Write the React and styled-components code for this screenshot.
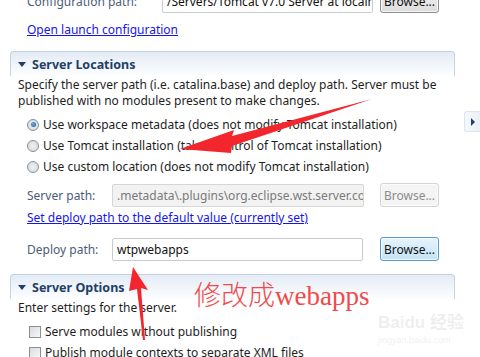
import React from 'react'
import styled, { createGlobalStyle } from 'styled-components'

const Global = createGlobalStyle`
  html, body { margin: 0; padding: 0; background: #fff; overflow: hidden; }
  body { font-family: "Noto Sans", "Open Sans", sans-serif; font-size: 12px; color: #1e1e1e; }
`

const Page = styled.div`
  position: relative;
  width: 480px;
  height: 357px;
  overflow: hidden;
`

const Content = styled.div`
  margin-top: -11px;
  padding: 0 25px 0 10px;
  display: flex;
  flex-direction: column;
`

const FormRow = styled.div`
  display: flex;
  align-items: center;
  height: ${p => p.h || 24}px;
  padding-left: 17px;
  margin-top: ${p => p.mt || 0}px;
`

const Label = styled.span`
  width: ${p => p.w}px;
  flex-shrink: 0;
  color: #4b5c78;
`

const Field = styled.div`
  box-sizing: border-box;
  width: ${p => p.w}px;
  height: ${p => p.h || 23}px;
  border: 1px solid ${p => p.disabled ? '#d6d6d6' : '#c8ccd2'};
  border-radius: 2px;
  background: ${p => p.disabled ? '#f2f2f2' : '#fff'};
  color: ${p => p.disabled ? '#7a7a7a' : '#111'};
  padding: 0 4px;
  display: flex;
  align-items: center;
  white-space: nowrap;
  overflow: hidden;
`

const Button = styled.div`
  box-sizing: border-box;
  width: 59px;
  height: 24px;
  margin-left: ${p => p.ml}px;
  border-radius: 3px;
  display: flex;
  align-items: center;
  justify-content: center;
  border: 1px solid ${p => p.active ? '#5c9ac9' : p.disabled ? '#d4d4d4' : '#8f8f8f'};
  background: ${p => p.active
    ? 'linear-gradient(#e6f4fc, #c4e3f6)'
    : p.disabled ? '#f4f4f4' : 'linear-gradient(#f2f2f2, #dcdcdc)'};
  color: ${p => p.disabled ? '#8c8c8c' : '#111'};
  box-shadow: inset 0 0 0 1px rgba(255,255,255,0.7);
`

const Link = styled.a`
  color: #1515e8;
  text-decoration: underline;
  padding-left: 17px;
  height: ${p => p.h || 20}px;
  line-height: ${p => p.h || 20}px;
  margin-top: ${p => p.mt || 0}px;
`

const SectionHead = styled.div`
  margin-top: ${p => p.mt}px;
  height: 24px;
  border: 1px solid #c3d1e2;
  border-bottom: none;
  border-radius: 4px 4px 0 0;
  background: linear-gradient(#e4ebf5, #fdfeff);
  display: flex;
  align-items: center;
  padding-left: 7px;
  font-weight: 700;
  color: #223f66;
  font-size: 12.5px;
  gap: 6px;
`

const Tri = styled.span`
  width: 0;
  height: 0;
  border-left: 4px solid transparent;
  border-right: 4px solid transparent;
  border-top: 5px solid #223f66;
`

const Desc = styled.div`
  padding-left: 8px;
  line-height: 16px;
  margin-top: ${p => p.mt || 0}px;
`

const OptionList = styled.div`
  display: flex;
  flex-direction: column;
  padding-left: 17px;
  margin-top: ${p => p.mt || 0}px;
`

const Option = styled.label`
  display: flex;
  align-items: center;
  gap: 4px;
  height: 21px;
  white-space: nowrap;
`

const Radio = styled.span`
  box-sizing: border-box;
  width: 12px;
  height: 12px;
  border-radius: 50%;
  border: 1px solid #8a8f96;
  background: radial-gradient(circle, #eef0f2 0%, #d4d8dc 100%);
  display: flex;
  align-items: center;
  justify-content: center;
  &::after {
    content: '';
    width: 5px;
    height: 5px;
    border-radius: 50%;
    background: ${p => p.checked ? 'radial-gradient(circle at 40% 40%, #6fb6ee, #18487a)' : 'transparent'};
  }
`

const Check = styled.span`
  box-sizing: border-box;
  width: 12px;
  height: 12px;
  margin-left: 2px;
  border: 1px solid #8a8f96;
  background: linear-gradient(135deg, #d9dcdf, #f6f7f8);
`

const SideTab = styled.div`
  position: absolute;
  right: 0;
  top: 111px;
  width: 15px;
  height: 19px;
  border: 1px solid #dde5ee;
  border-right: none;
  border-radius: 3px 0 0 3px;
  background: linear-gradient(90deg, #f6f9fc, #eaf0f6);
  display: flex;
  align-items: center;
  justify-content: center;
  &::after {
    content: '';
    border-top: 4px solid transparent;
    border-bottom: 4px solid transparent;
    border-left: 4px solid #1d3f6e;
  }
`

const Note = styled.div`
  position: absolute;
  left: 194px;
  top: 280px;
  color: #f24a4a;
  font-family: "Liberation Serif", "Noto Sans CJK SC", serif;
  font-size: 27px;
  font-weight: 300;
  line-height: 32px;
  white-space: nowrap;
`

const Watermark = styled.div`
  position: absolute;
  left: 378px;
  top: 308px;
  color: rgba(180,180,180,0.22);
  font-family: "Liberation Sans", "Noto Sans CJK SC", sans-serif;
  display: flex;
  flex-direction: column;
  align-items: flex-start;
  white-space: nowrap;
  div:first-child { font-size: 17px; font-weight: 700; }
  div:last-child { font-size: 9px; margin-top: 2px; }
`

const Arrows = styled.svg`
  position: absolute;
  left: 0;
  top: 0;
  pointer-events: none;
`

export default function App() {
  return (
    <Page>
      <Global />
      <Content>
        <FormRow>
          <Label w={135}>Configuration path:</Label>
          <Field w={211}>/Servers/Tomcat v7.0 Server at localh</Field>
          <Button ml={7}>Browse...</Button>
        </FormRow>
        <Link h={20} mt={7}>Open launch configuration</Link>
        <SectionHead mt={11}><Tri />Server Locations</SectionHead>
        <Desc mt={1}>
          Specify the server path (i.e. catalina.base) and deploy path. Server must be<br />
          published with no modules present to make changes.
        </Desc>
        <OptionList mt={5}>
          <Option><Radio checked />Use workspace metadata (does not modify Tomcat installation)</Option>
          <Option><Radio />Use Tomcat installation (takes control of Tomcat installation)</Option>
          <Option><Radio />Use custom location (does not modify Tomcat installation)</Option>
        </OptionList>
        <FormRow h={26} mt={5}>
          <Label w={85}>Server path:</Label>
          <Field w={252} disabled>.metadata\.plugins\org.eclipse.wst.server.co</Field>
          <Button ml={16} disabled>Browse...</Button>
        </FormRow>
        <Link h={20} mt={0}>Set deploy path to the default value (currently set)</Link>
        <FormRow h={26} mt={8}>
          <Label w={85}>Deploy path:</Label>
          <Field w={251}>wtpwebapps</Field>
          <Button ml={17} active>Browse...</Button>
        </FormRow>
        <SectionHead mt={12}><Tri />Server Options</SectionHead>
        <Desc mt={1}>Enter settings for the server.</Desc>
        <OptionList mt={5}>
          <Option><Check />Serve modules without publishing</Option>
          <Option><Check />Publish module contexts to separate XML files</Option>
        </OptionList>
      </Content>
      <SideTab />
      <Note>修改成webapps</Note>
      <Watermark>
        <div>Baidu 经验</div>
        <div>jingyan.baidu.com</div>
      </Watermark>
      <Arrows width="480" height="357" viewBox="0 0 480 357">
        <path d="M372 99 L232 136 L234 130 L180 149 L231 153 L232 146 Z" fill="#f2262c" />
        <path d="M133 267 L148 290 L141 288 L145 340 L143 340 L137 289 L129 291 Z" fill="#f2262c" />
      </Arrows>
    </Page>
  )
}
